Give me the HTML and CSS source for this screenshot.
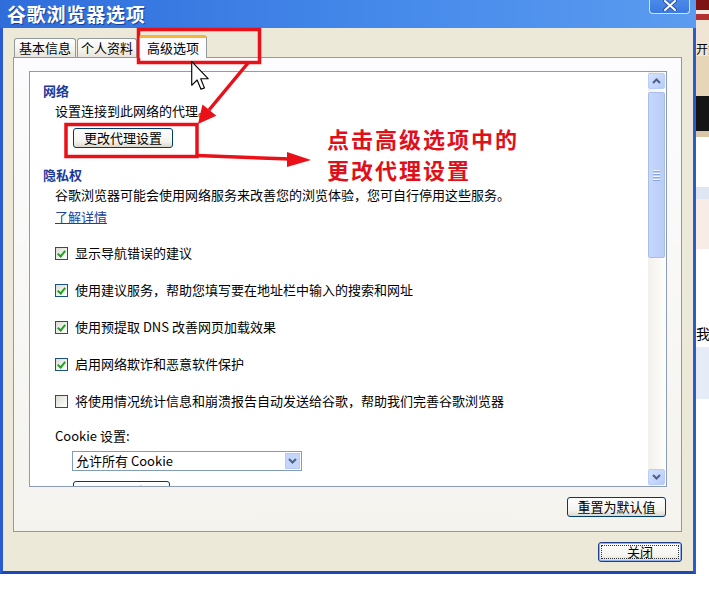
FILE: index.html
```html
<!DOCTYPE html>
<html lang="zh">
<head>
  <meta charset="UTF-8" />
  <title>谷歌浏览器选项</title>
  <link rel="stylesheet" href="styles.css">
</head>
<body>
  <div class="screen">
    <div class="window">
      <div class="titlebar">
        <span class="title">谷歌浏览器选项</span>
        <span class="close-x">
          <svg width="14" height="11" viewBox="0 0 14 11">
            <path d="M2 1 L12 10 M12 1 L2 10" stroke="#2b55b0" stroke-width="4" stroke-linecap="round"/>
            <path d="M2 1 L12 10 M12 1 L2 10" stroke="#fff" stroke-width="2" stroke-linecap="round"/>
          </svg>
        </span>
      </div>
      <div class="client">
        <div class="tabs">
          <div class="tab">基本信息</div>
          <div class="tab second">个人资料</div>
          <div class="tab active">高级选项</div>
        </div>
        <div class="panel">
          <div class="scrollbox">
            <div class="content">
              <div class="section-title">网络</div>
              <div class="para">设置连接到此网络的代理。</div>
              <button class="xp-btn proxy-btn">更改代理设置</button>

              <div class="section-title privacy">隐私权</div>
              <div class="para">谷歌浏览器可能会使用网络服务来改善您的浏览体验，您可自行停用这些服务。</div>
              <a class="more" href="#">了解详情</a>

              <div class="check-row first"><span class="cb on"></span>显示导航错误的建议</div>
              <div class="check-row"><span class="cb on"></span>使用建议服务，帮助您填写要在地址栏中输入的搜索和网址</div>
              <div class="check-row"><span class="cb on"></span>使用预提取 DNS 改善网页加载效果</div>
              <div class="check-row"><span class="cb on"></span>启用网络欺诈和恶意软件保护</div>
              <div class="check-row"><span class="cb"></span>将使用情况统计信息和崩溃报告自动发送给谷歌，帮助我们完善谷歌浏览器</div>

              <div class="cookie-label">Cookie 设置:</div>
              <div class="select">
                <span>允许所有 Cookie</span>
                <span class="select-arrow"><svg width="9" height="6" viewBox="0 0 9 6"><path d="M1 1 L4.5 4.5 L8 1" fill="none" stroke="#4d6185" stroke-width="2"/></svg></span>
              </div>
              <button class="xp-btn cut-btn">显示 Cookie</button>
            </div>
            <div class="scrollbar">
              <div class="sb-btn"><svg width="9" height="6" viewBox="0 0 9 6"><path d="M1 5 L4.5 1.5 L8 5" fill="none" stroke="#4d6185" stroke-width="2"/></svg></div>
              <div class="sb-thumb"><span></span><span></span><span></span><span></span></div>
              <div class="sb-track"></div>
              <div class="sb-btn"><svg width="9" height="6" viewBox="0 0 9 6"><path d="M1 1 L4.5 4.5 L8 1" fill="none" stroke="#4d6185" stroke-width="2"/></svg></div>
            </div>
          </div>
          <div class="panel-foot">
            <button class="xp-btn">重置为默认值</button>
          </div>
        </div>
        <div class="dialog-foot">
          <button class="xp-btn default">关闭</button>
        </div>
      </div>
    </div>
    <div class="strip">
      <div class="s1"></div>
      <div class="s2"></div>
      <div class="s3"></div>
      <div class="s4">开始</div>
      <div class="s5"></div>
      <div class="s6"></div>
      <div class="s7"></div>
      <div class="s8"></div>
      <div class="s9"></div>
      <div class="s10"></div>
      <div class="s11">我们</div>
      <div class="s12"></div>
      <div class="s13"></div>
    </div>
  </div>

  <!-- red hand-drawn marks over the dialog -->
  <svg class="marks" width="709" height="604" viewBox="0 0 709 604">
    <rect x="138.5" y="29.5" width="121" height="33" fill="none" stroke="#ea1018" stroke-width="3.5"/>
    <rect x="66" y="124.5" width="131" height="32" fill="none" stroke="#ea1018" stroke-width="3.5"/>
    <line x1="248" y1="63" x2="209" y2="110" stroke="#ea1018" stroke-width="3.5"/>
    <polygon points="198,124 216.3,115.8 202.5,104.4" fill="#ea1018"/>
    <line x1="197" y1="155.5" x2="290" y2="159" stroke="#ea1018" stroke-width="3.5"/>
    <polygon points="287,152 311,160 287,167" fill="#ea1018"/>
  </svg>
  <div class="note">点击高级选项中的<br>更改代理设置</div>
  <svg class="cursor" width="20" height="30" viewBox="0 0 14 21">
    <path d="M0.5 0.5 L0.5 17 L4.3 13.3 L7 19.8 L9.4 18.8 L6.8 12.4 L12 12.4 Z" fill="#fff" stroke="#000" stroke-width="0.8" stroke-linejoin="round"/>
  </svg>
</body>
</html>
```

FILE: styles.css
```css
body {
  margin: 0;
  background: #fff;
  font-family: "Noto Sans CJK SC", sans-serif;
  font-size: 13px;
  color: #000;
  position: relative;
  width: 709px;
  height: 604px;
  overflow: hidden;
}
.screen {
  display: flex;
  height: 575px;
}
.window {
  width: 696px;
  height: 574px;
  box-sizing: border-box;
  background: #ece9d8;
  border-left: 3px solid #2a5bd0;
  border-right: 3px solid #2a5bd0;
  border-bottom: 3px solid #1d48b8;
  display: flex;
  flex-direction: column;
}
.titlebar {
  height: 28px;
  flex: none;
  display: flex;
  align-items: center;
  justify-content: space-between;
  background: linear-gradient(to right, #2f6ddb, #4589ea 55%, #5b9cf0);
  margin: 0 -3px;
  padding: 0 0 0 7px;
}
.title {
  color: #fff;
  font-size: 19px;
  font-weight: bold;
  letter-spacing: 0.8px;
  line-height: 24px;
  text-shadow: 1px 1px 0 #1a3f98;
}
.close-x {
  align-self: flex-start;
  width: 41px;
  height: 14px;
  box-sizing: border-box;
  margin-right: 6px;
  border: 1px solid #d2e0fb;
  border-top: none;
  border-radius: 0 0 4px 4px;
  background: linear-gradient(#4c8ae8, #3b7be0);
  display: flex;
  align-items: flex-start;
  justify-content: center;
}
.client {
  flex: 1;
  padding: 7px 11px 0 10px;
  display: flex;
  flex-direction: column;
}
.tabs {
  display: flex;
  height: 22px;
  align-items: flex-end;
  margin-left: 1px;
  gap: 1px;
}
.tab {
  height: 19px;
  box-sizing: border-box;
  padding: 0 4px;
  border: 1px solid #919b9c;
  border-bottom: none;
  border-radius: 3px 3px 0 0;
  background: linear-gradient(#fff, #f3f2ec 60%, #e6e4dc);
  line-height: 18px;
}
.tab.second {
  padding: 0 3px;
}
.tab.active {
  height: 23px;
  padding: 0 7px;
  background: #fcfcfe;
  border-top: 3px solid #f7b43b;
  line-height: 19px;
  margin-bottom: -1px;
  margin-left: 1px;
  position: relative;
  z-index: 1;
}
.panel {
  height: 475px;
  box-sizing: border-box;
  border: 1px solid #919b9c;
  background: linear-gradient(#fcfcfe, #f4f3ee);
  padding: 13px 14px 0 15px;
}
.scrollbox {
  height: 416px;
  box-sizing: border-box;
  border: 1px solid #8c9cb6;
  background: #fff;
  display: flex;
  overflow: hidden;
}
.content {
  flex: 1;
  padding: 10px 0 0 13px;
  line-height: 18px;
}
.section-title {
  color: #1b3a9a;
  font-weight: bold;
}
.section-title.privacy {
  margin-top: 18px;
}
.para {
  margin-top: 2px;
  margin-left: 12px;
}
.xp-btn {
  font-family: "Noto Sans CJK SC", sans-serif;
  font-size: 13px;
  height: 20px;
  line-height: 16px;
  padding: 0 8px;
  border: 1px solid #003c74;
  border-radius: 3px;
  background: linear-gradient(#fff, #f4f3ee 70%, #dcd8cb);
  color: #000;
}
.proxy-btn {
  display: block;
  margin: 8px 0 0 30px;
  width: 100px;
}
.more {
  display: inline-block;
  margin: 4px 0 0 12px;
  color: #1c3fa0;
  text-decoration: underline;
}
.check-row {
  display: flex;
  align-items: center;
  margin-left: 12px;
  margin-top: 19px;
}
.check-row.first {
  margin-top: 18px;
}
.cb {
  width: 11px;
  height: 11px;
  border: 1px solid #1c5180;
  background: linear-gradient(135deg, #dcdcd6, #fff);
  margin-right: 7px;
  position: relative;
}
.cb.on::after {
  content: "";
  position: absolute;
  left: 3px;
  top: 1px;
  width: 3px;
  height: 6px;
  border: solid #21a121;
  border-width: 0 2px 2px 0;
  transform: rotate(40deg);
}
.cookie-label {
  margin: 17px 0 0 12px;
}
.select {
  width: 230px;
  height: 20px;
  box-sizing: border-box;
  margin: 6px 0 0 29px;
  border: 1px solid #7f9db9;
  display: flex;
  align-items: center;
  justify-content: space-between;
  padding-left: 3px;
}
.select-arrow {
  width: 15px;
  height: 16px;
  margin-right: 1px;
  background: #c5d6fc;
  border: 1px solid #b6cbf7;
  box-sizing: border-box;
  display: flex;
  align-items: center;
  justify-content: center;
}
.cut-btn {
  display: block;
  margin: 10px 0 0 30px;
  width: 97px;
}
.scrollbar {
  width: 17px;
  padding: 1px 1px 1px 0;
  display: flex;
  flex-direction: column;
  background: linear-gradient(to right, #f3f1ec, #fefefb);
}
.sb-btn {
  height: 16px;
  flex: none;
  box-sizing: border-box;
  border: 1px solid #b8cdf7;
  border-radius: 2px;
  background: linear-gradient(135deg, #d6e3fe, #b7cbf8);
  display: flex;
  align-items: center;
  justify-content: center;
}
.sb-thumb {
  height: 166px;
  margin-top: 3px;
  flex: none;
  box-sizing: border-box;
  border: 1px solid #a9bde9;
  border-radius: 2px;
  background: linear-gradient(to right, #c7d7fc, #b9cdf8);
  display: flex;
  flex-direction: column;
  align-items: center;
  justify-content: center;
  gap: 1px;
}
.sb-thumb span {
  width: 7px;
  height: 1px;
  background: #eef3fe;
  border-bottom: 1px solid #8ca6e0;
}
.sb-track {
  flex: 1;
}
.panel-foot {
  display: flex;
  justify-content: flex-end;
  padding: 10px 1px 0 0;
}
.panel-foot .xp-btn {
  width: 99px;
}
.dialog-foot {
  display: flex;
  justify-content: flex-end;
  padding-top: 10px;
}
.xp-btn.default {
  width: 84px;
  border-color: #1f3f8c;
  box-shadow: inset 0 0 0 1px #8fb0ea;
  outline: 1px dotted #333;
  outline-offset: -4px;
}
.strip {
  width: 13px;
  overflow: hidden;
  display: flex;
  flex-direction: column;
  font-size: 12px;
  line-height: 13px;
  white-space: nowrap;
}
.s1 { height: 10px; background: #7d1313; }
.s2 { height: 4px; background: #f4ede2; }
.s3 { height: 28px; background: linear-gradient(#b33131 0 6px, #efe5d2 6px); }
.s4 { height: 14px; background: #efe5d2; }
.s5 { height: 40px; background: #e6d5b6; }
.s6 { height: 35px; background: #151515; }
.s7 { height: 6px; background: #d8c6a6; }
.s8 { height: 50px; background: #fff; }
.s9 { height: 12px; background: #dfe6f2; }
.s10 { height: 128px; background: linear-gradient(#f7ece6 0 50px, #fff 50px); }
.s11 { height: 20px; background: #fff; font-size: 14px; }
.s12 { height: 52px; background: #e5ecf8; }
.s13 { flex: 1; background: #fff; }
.marks {
  position: absolute;
  top: 0;
  left: 0;
  pointer-events: none;
}
.note {
  position: absolute;
  left: 327px;
  top: 123px;
  color: #e0101a;
  font-size: 22px;
  font-weight: bold;
  letter-spacing: 2px;
  line-height: 31px;
}
.cursor {
  position: absolute;
  left: 191px;
  top: 61px;
}
```
